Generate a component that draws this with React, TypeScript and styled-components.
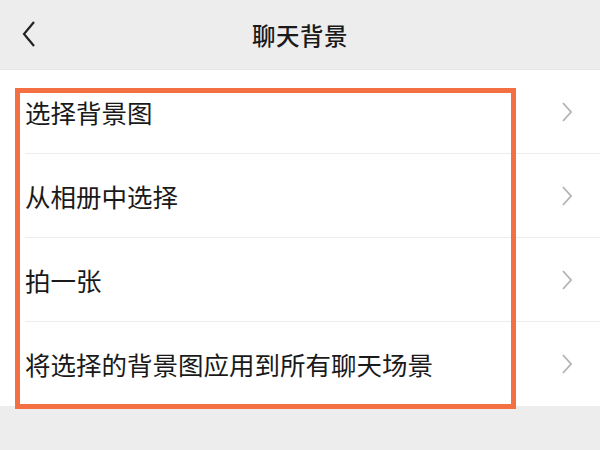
import styled, { createGlobalStyle } from 'styled-components';

const GlobalStyle = createGlobalStyle`
    html, body {
        margin: 0;
        padding: 0;
        background: #ededed;
    }
    body {
        font-family: "Noto Sans CJK SC", "Noto Sans", sans-serif;
        color: #1a1a1a;
    }
`;

const Page = styled.div`
    width: 600px;
    height: 450px;
    background: #ededed;
    overflow: hidden;
`;

const Header = styled.header`
    height: 70px;
    display: flex;
    align-items: center;
    justify-content: center;
    position: relative;
    box-sizing: border-box;
    border-bottom: 1px solid #e6e6e6;
`;

const BackButton = styled.button`
    position: absolute;
    left: 17px;
    top: 19px;
    width: 24px;
    height: 30px;
    padding: 0;
    border: none;
    background: transparent;
    display: flex;
    align-items: center;
    justify-content: center;
`;

const Title = styled.h1`
    margin: 0;
    font-size: 23.5px;
    font-weight: 500;
    color: #1a1a1a;
    letter-spacing: 0.5px;
`;

const ListWrap = styled.div`
    position: relative;
`;

const List = styled.ul`
    margin: 0;
    padding: 0;
    list-style: none;
    background: #fff;
`;

const Row = styled.li<{ $last?: boolean }>`
    height: 84px;
    display: flex;
    align-items: center;
    padding-left: 25px;
    position: relative;

    &::after {
        content: '';
        display: ${p => (p.$last ? 'none' : 'block')};
        position: absolute;
        left: 25px;
        right: 0;
        bottom: 0;
        height: 1px;
        background: #ececec;
    }
`;

const Label = styled.span`
    flex: 1;
    font-size: 25.5px;
    line-height: 1;
    color: #1a1a1a;
`;

const Arrow = styled.span`
    width: 14px;
    height: 22px;
    margin-right: 26px;
    display: flex;
`;

const Highlight = styled.div`
    position: absolute;
    left: 15px;
    top: 18px;
    width: 501px;
    height: 321px;
    box-sizing: border-box;
    border: 5px solid #f47043;
    pointer-events: none;
`;

const items = [
    '选择背景图',
    '从相册中选择',
    '拍一张',
    '将选择的背景图应用到所有聊天场景',
];

const App = () => (
    <Page>
        <GlobalStyle />
        <Header>
            <BackButton aria-label="返回">
                <svg width="18" height="28" viewBox="0 0 18 28">
                    <path d="M14 2 L4 14 L14 26" fill="none" stroke="#222" strokeWidth="2.2" />
                </svg>
            </BackButton>
            <Title>聊天背景</Title>
        </Header>
        <ListWrap>
            <List>
                {items.map((text, i) => (
                    <Row key={text} $last={i === items.length - 1}>
                        <Label>{text}</Label>
                        <Arrow>
                            <svg width="14" height="22" viewBox="0 0 14 22">
                                <path d="M3 2 L11 11 L3 20" fill="none" stroke="#b3b3b3" strokeWidth="1.8" />
                            </svg>
                        </Arrow>
                    </Row>
                ))}
            </List>
            <Highlight />
        </ListWrap>
    </Page>
);

export default App;
